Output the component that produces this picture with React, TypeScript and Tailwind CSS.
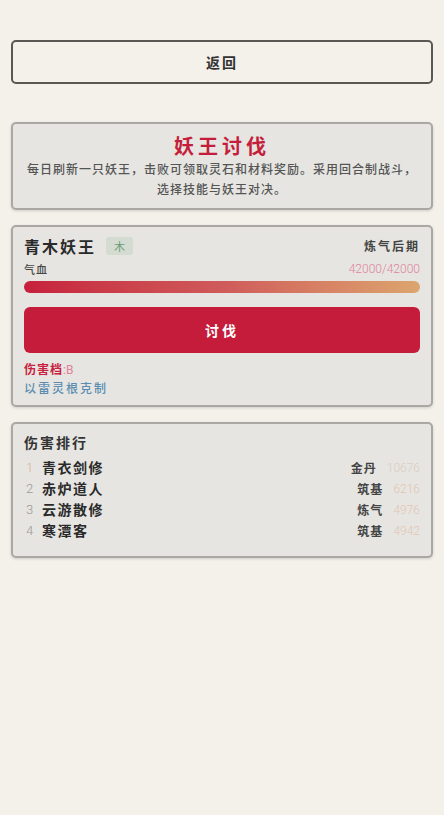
const cjk = { fontFamily: '"Noto Sans CJK SC", "Noto Sans", sans-serif' }
const num = { fontFamily: 'Roboto, "Liberation Sans", sans-serif' }

const ranking = [
  { rank: 1, name: "青衣剑修", realm: "金丹", damage: 10676 },
  { rank: 2, name: "赤炉道人", realm: "筑基", damage: 6216 },
  { rank: 3, name: "云游散修", realm: "炼气", damage: 4976 },
  { rank: 4, name: "寒潭客", realm: "筑基", damage: 4942 },
]

function Card({ children, className = "" }: { children: React.ReactNode; className?: string }) {
  return (
    <div className={`bg-[#e6e5e1] border-2 border-[#a9a8a5] rounded-[5px] shadow-[0_1px_3px_rgba(0,0,0,0.15)] px-[11px] ${className}`}>
      {children}
    </div>
  )
}

export default function App() {
  return (
    <div className="min-h-[815px] bg-[#f4f1ea] px-[11px] pt-[40px] text-[#333]" style={cjk}>
      <button className="w-full h-[44px] border-2 border-[#5a5854] rounded-[5px] bg-[#f4f1ea] text-[14px] font-semibold text-[#333] tracking-[2px]">
        返回
      </button>

      <Card className="mt-[38px] py-[9px] text-center">
        <h1 className="text-[20px] leading-[26px] font-bold text-[#c41e3a] tracking-[4px]">妖王讨伐</h1>
        <p className="text-[12px] leading-[20px] text-[#555] font-medium tracking-[1px]">
          每日刷新一只妖王，击败可领取灵石和材料奖励。采用回合制战斗，
          <br />
          选择技能与妖王对决。
        </p>
      </Card>

      <Card className="mt-[15px] pt-[10px] pb-[9px]">
        <div className="flex items-center justify-between h-[18px]">
          <div className="flex items-center">
            <span className="text-[16px] font-bold tracking-[2px] text-[#2a2a2a]">青木妖王</span>
            <span className="ml-[10px] w-[27px] h-[18px] rounded-[3px] bg-[#d4dcd2] text-[#6b9a77] text-[11px] flex items-center justify-center">
              木
            </span>
          </div>
          <span className="text-[12px] font-semibold tracking-[2px] text-[#444]">炼气后期</span>
        </div>
        <div className="mt-[6px] flex items-center justify-between leading-[16px]">
          <span className="text-[11px] font-medium text-[#444] tracking-[1px]">气血</span>
          <span className="text-[12px] font-light text-[#e0849c]" style={num}>42000/42000</span>
        </div>
        <div className="mt-[4px] h-[12px] rounded-full bg-gradient-to-r from-[#c61f3c] via-[#cf5a5a] to-[#dca56e]" />
        <button className="mt-[14px] w-full h-[46px] rounded-[6px] bg-[#c41c3a] text-white text-[14px] font-bold tracking-[3px]">
          讨伐
        </button>
        <div className="mt-[7px] leading-[17px] text-[12px]">
          <span className="font-semibold text-[#c8203e] tracking-[1px]">伤害档</span>
          <span className="text-[#e07f98]" style={num}>:B</span>
        </div>
        <div className="leading-[17px] text-[12px] font-medium text-[#5b8db3] tracking-[2px]">以雷灵根克制</div>
      </Card>

      <Card className="mt-[15px] pt-[9px] pb-[15px]">
        <div className="text-[14px] leading-[18px] font-semibold tracking-[2px] text-[#333]">伤害排行</div>
        <div className="mt-[6px]">
          {ranking.map((r) => (
            <div key={r.rank} className="flex items-center justify-between h-[21px]">
              <div className="flex items-center">
                <span
                  className={`w-[18px] pl-[2px] text-[13px] font-light ${r.rank === 1 ? "text-[#d4b48a]" : "text-[#9a9894]"}`}
                  style={num}
                >
                  {r.rank}
                </span>
                <span className="text-[14px] font-bold tracking-[1.5px] text-[#2a2a2a]">{r.name}</span>
              </div>
              <div className="flex items-center gap-[10px]">
                <span className="text-[12px] font-semibold tracking-[1px] text-[#444]">{r.realm}</span>
                <span
                  className={`text-[12px] font-light ${r.rank === 1 ? "text-[#d8cdc0]" : "text-[#e2c6b2]"}`}
                  style={num}
                >
                  {r.damage}
                </span>
              </div>
            </div>
          ))}
        </div>
      </Card>
    </div>
  )
}
